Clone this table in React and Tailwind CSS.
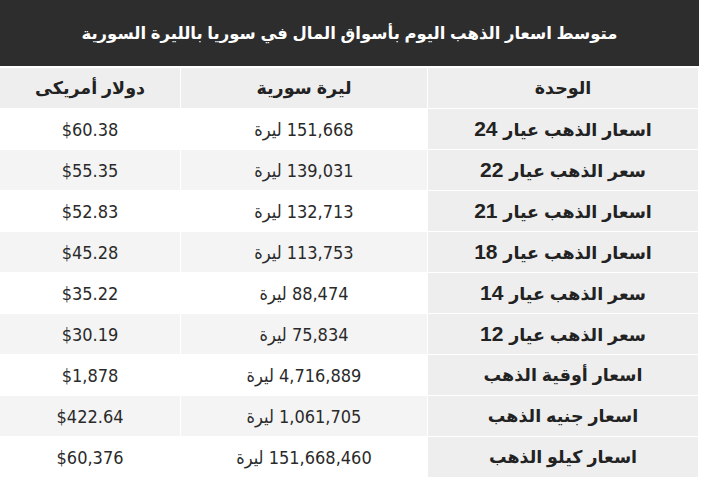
import React from "react";

const rows = [
  { unit: "اسعار الذهب عيار", k: "24", lira: "151,668", usd: "$60.38" },
  { unit: "سعر الذهب عيار", k: "22", lira: "139,031", usd: "$55.35" },
  { unit: "اسعار الذهب عيار", k: "21", lira: "132,713", usd: "$52.83" },
  { unit: "اسعار الذهب عيار", k: "18", lira: "113,753", usd: "$45.28" },
  { unit: "سعر الذهب عيار", k: "14", lira: "88,474", usd: "$35.22" },
  { unit: "سعر الذهب عيار", k: "12", lira: "75,834", usd: "$30.19" },
  { unit: "اسعار أوقية الذهب", k: "", lira: "4,716,889", usd: "$1,878" },
  { unit: "اسعار جنيه الذهب", k: "", lira: "1,061,705", usd: "$422.64" },
  { unit: "اسعار كيلو الذهب", k: "", lira: "151,668,460", usd: "$60,376" },
];

const head =
  "h-[40px] bg-[#eeeeee] flex items-center justify-center text-[17.5px] font-bold text-[#222] font-['Liberation_Sans','DejaVu_Sans',sans-serif]";
const num =
  "h-[40px] flex items-center justify-center text-[18px] text-[#2a2a2a] font-['DejaVu_Sans_Condensed','DejaVu_Sans',sans-serif]";

export default function App() {
  return (
    <div className="w-[717px] h-[485px] bg-white" dir="ltr">
      <div className="w-[699px] h-[66px] bg-[#2d2d2d] flex items-center justify-center" dir="rtl">
        <span className="text-white font-bold text-[16.5px] font-['Liberation_Sans','DejaVu_Sans',sans-serif]">
          متوسط اسعار الذهب اليوم بأسواق المال في سوريا بالليرة السورية
        </span>
      </div>
      <div className="mt-[2px] w-[698px] grid grid-cols-[270px_246px_180px] gap-[1px] bg-white" dir="rtl">
        <div className={head}>الوحدة</div>
        <div className={head}>ليرة سورية</div>
        <div className={head}>دولار أمريكى</div>
        {rows.map((r, i) => {
          const alt = i % 2 === 1 ? "bg-[#f4f4f4]" : "bg-white";
          return (
            <React.Fragment key={i}>
              <div className={head}>
                <span>
                  {r.unit}
                  {r.k && <span className="text-[21px]"> {r.k}</span>}
                </span>
              </div>
              <div className={`${num} ${alt}`}>
                <span dir="rtl">{r.lira} ليرة</span>
              </div>
              <div className={`${num} ${alt}`}>
                <span dir="ltr">{r.usd}</span>
              </div>
            </React.Fragment>
          );
        })}
      </div>
    </div>
  );
}
